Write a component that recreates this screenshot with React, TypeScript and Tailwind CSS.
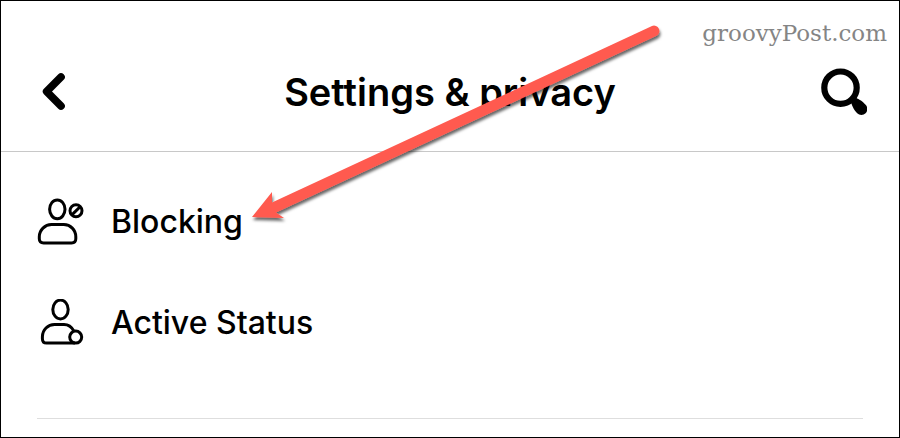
import React from 'react';

function BackIcon() {
  return (
    <svg width="28" height="44" viewBox="0 0 28 44" fill="none" aria-hidden="true">
      <path
        d="M24 7 L9.6 21.5 L24 36"
        stroke="#000"
        strokeWidth="7.6"
        strokeLinecap="round"
        strokeLinejoin="round"
      />
    </svg>
  );
}

function SearchIcon() {
  return (
    <svg width="48" height="48" viewBox="0 0 48 48" fill="none" aria-hidden="true">
      <circle cx="21.5" cy="19.7" r="16.2" stroke="#000" strokeWidth="6.2" />
      <path
        d="M31 33 L35.5 28.5 C37.5 30.3 39 30.9 40.5 31.7 C43 33 45 34.8 46.6 36.8 A5.8 5.8 0 0 1 38.2 45.2 C36.3 43.4 34.8 41.4 33.6 38.6 C32.9 36.8 32.3 35 31 33 Z"
        fill="#000"
      />
    </svg>
  );
}

function BlockingIcon() {
  return (
    <svg width="48" height="48" viewBox="0 0 48 48" fill="none" stroke="#000" strokeWidth="3" aria-hidden="true">
      <ellipse cx="20.3" cy="11.3" rx="7.7" ry="9.4" />
      <path d="M14.5 26.6 H26.8 C33.5 26.6 38.8 31.8 38.8 38.8 V40.8 Q38.8 45 34.6 45 H6.6 Q2.3 45 2.3 40.8 V38.8 C2.3 31.8 8 26.6 14.5 26.6 Z" />
      <circle cx="39" cy="12.8" r="6" />
      <path d="M34.9 16.9 L43.1 8.7" />
    </svg>
  );
}

function ActiveStatusIcon() {
  return (
    <svg width="48" height="48" viewBox="0 0 48 48" fill="none" stroke="#000" strokeWidth="3" aria-hidden="true">
      <ellipse cx="23.5" cy="10.5" rx="7.7" ry="9.4" />
      <path d="M37 32.2 C34.5 27.7 31 25.5 27 25.5 H17.5 C11 25.5 5.4 30.7 5.4 37.7 V39.7 Q5.4 44.1 9.6 44.1 H38" />
      <circle cx="38.7" cy="38.1" r="6" />
    </svg>
  );
}

const ITEMS = [
  { id: 'blocking', label: 'Blocking', icon: BlockingIcon },
  { id: 'active-status', label: 'Active Status', icon: ActiveStatusIcon },
];

// Callout arrow that lies over the header and the first row
function CalloutArrow() {
  return (
    <svg
      className="pointer-events-none absolute top-0 left-0"
      width="680"
      height="240"
      viewBox="0 0 680 240"
      aria-hidden="true"
    >
      <defs>
        <filter id="arrow-shadow" x="-5%" y="-10%" width="110%" height="120%">
          <feDropShadow dx="1" dy="3" stdDeviation="1.5" floodColor="#000" floodOpacity="0.6" />
        </filter>
      </defs>
      <path
        d="M251 216 L271 191 L271 201.5 L651 25 A5.4 5.4 0 0 1 655.5 34.8 L275 211.5 L283 217 Z"
        fill="#ff5a4f"
        filter="url(#arrow-shadow)"
      />
    </svg>
  );
}

export default function App() {
  return (
    <div className="relative border border-black bg-white font-['Inter',sans-serif] text-black">
      <header className="grid grid-cols-[1fr_auto_1fr] items-center border-b border-[#c8c8c8] px-8 pt-[66px] pb-[34px]">
        <button type="button" aria-label="Back" className="ml-1 justify-self-start">
          <BackIcon />
        </button>
        <h1 className="text-[38px] leading-[50px] font-semibold">Settings &amp; privacy</h1>
        <button type="button" aria-label="Search" className="justify-self-end">
          <SearchIcon />
        </button>
      </header>

      <main className="px-9 pt-[19px]">
        <ul className="border-b border-[#dedede] pb-[45px]">
          {ITEMS.map(({ id, label, icon: Icon }) => (
            <li key={id}>
              <button type="button" className="flex w-full items-center gap-[26px] py-6 text-left">
                <Icon />
                <span className="text-[32px] leading-[53px] font-medium">{label}</span>
              </button>
            </li>
          ))}
        </ul>
        <div className="h-[18px]" />
      </main>

      <span className="absolute top-4 right-3 font-['DejaVu_Serif',serif] text-[23px] leading-8 text-[#858585]">
        groovyPost.com
      </span>

      <CalloutArrow />
    </div>
  );
}
